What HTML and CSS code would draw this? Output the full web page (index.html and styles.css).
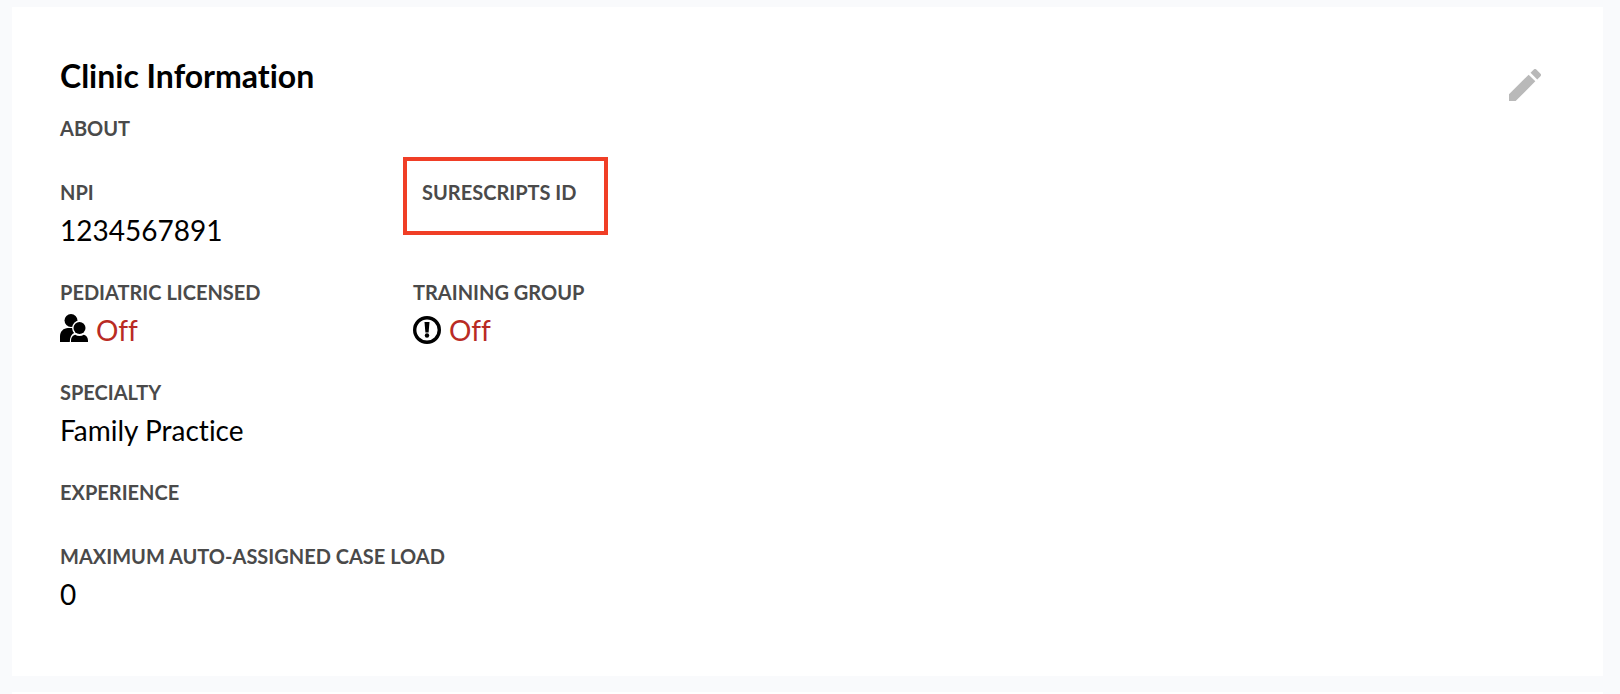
FILE: index.html
```html
<!DOCTYPE html>
<html lang="en">
<head>
    <meta charset="UTF-8">
    <meta name="viewport" content="width=device-width, initial-scale=1.0">
    <title>Clinic Information</title>
    <link rel="stylesheet" href="styles.css">
</head>
<body>
    <main class="page">
        <section class="card">
            <div class="details">
                <h2 class="card-title">Clinic Information</h2>
                <dl class="fields">
                    <div class="field wide">
                        <dt>About</dt>
                    </div>
                    <div class="field">
                        <dt>NPI</dt>
                        <dd>1234567891</dd>
                    </div>
                    <div class="field highlight">
                        <dt>Surescripts ID</dt>
                    </div>
                    <div class="field">
                        <dt>Pediatric Licensed</dt>
                        <dd class="off">
                            <svg class="icon" viewBox="0 0 28 32" aria-hidden="true">
                                <circle cx="11" cy="6.5" r="6.5"/>
                                <path d="M0 28v-5.5C0 17.500 3.500 14 8 14h4.500a8 8 0 0 0 2 4.700C11.500 20 9.800 23 9.800 28z"/>
                                <circle cx="19.500" cy="14" r="7.400" fill="#fff"/>
                                <circle cx="19.500" cy="14" r="6"/>
                                <path d="M11 28v-1.500c0-3 1.600-5 4.200-5.700 2.600 1.600 6 1.600 8.600 0 2.600.7 4.200 2.700 4.200 5.700V28z"/>
                            </svg>
                            Off
                        </dd>
                    </div>
                    <div class="field">
                        <dt>Training Group</dt>
                        <dd class="off">
                            <svg class="icon" viewBox="0 0 28 32" aria-hidden="true">
                                <circle cx="14" cy="16" r="12.300" fill="none" stroke="#000" stroke-width="3.400"/>
                                <path d="M11.500 8h5l-.9 10.500h-3.200z"/>
                                <circle cx="14" cy="21.500" r="2.200"/>
                            </svg>
                            Off
                        </dd>
                    </div>
                    <div class="field wide">
                        <dt>Specialty</dt>
                        <dd>Family Practice</dd>
                    </div>
                    <div class="field wide">
                        <dt>Experience</dt>
                    </div>
                    <div class="field wide">
                        <dt>Maximum Auto-Assigned Case Load</dt>
                        <dd>0</dd>
                    </div>
                </dl>
            </div>
            <button type="button" class="edit-button" aria-label="Edit clinic information">
                <svg viewBox="3 3 18 18" aria-hidden="true">
                    <path d="M3 17.250V21h3.750L17.810 9.940l-3.750-3.750L3 17.250zM20.710 7.040a1 1 0 0 0 0-1.410l-2.340-2.340a1 1 0 0 0-1.410 0l-1.830 1.830 3.750 3.750 1.830-1.830z"/>
                </svg>
            </button>
        </section>
        <section class="card next-card"></section>
    </main>
</body>
</html>
```

FILE: styles.css
```css
*,
*::before {
    box-sizing: border-box;
}
body {
    margin: 0;
    background-color: #f9fafc;
    color: #000;
    font-family: Lato, "Liberation Sans", sans-serif;
    font-variant-ligatures: none;
}
.page {
    display: flex;
    flex-direction: column;
    gap: 16px;
    padding: 7px 17px 0 12px;
}
.card {
    display: flex;
    justify-content: space-between;
    align-items: flex-start;
    padding: 48px 48px 64px;
    background-color: #fff;
}
.next-card {
    padding: 0;
    min-height: 3px;
}
.details {
    flex: 1;
}
.card-title {
    margin: 0 0 12px;
    font-size: 32px;
    line-height: 41px;
    font-weight: bold;
}
.fields {
    display: grid;
    grid-template-columns: 353px 353px;
    row-gap: 24px;
    margin: 0;
}
.wide {
    grid-column: 1 / -1;
}
dt {
    color: #4a4a4a;
    font-size: 20px;
    line-height: 40px;
    font-weight: bold;
    text-transform: uppercase;
}
dd {
    margin: 0;
    font-size: 28px;
    line-height: 36px;
}
.off {
    display: flex;
    align-items: center;
    gap: 8px;
    color: #b92b24;
}
.icon {
    width: 28px;
    height: 32px;
    fill: #000;
}
.highlight {
    position: relative;
    justify-self: start;
    padding: 0 20px 0 9px;
}
/* red frame around the field */
.highlight::before {
    content: "";
    position: absolute;
    top: -15px;
    right: -11px;
    left: -10px;
    height: 78px;
    border: 4px solid #f03e26;
}
.edit-button {
    padding: 14px;
    border: none;
    background: none;
    cursor: pointer;
}
.edit-button svg {
    display: block;
    width: 32px;
    height: 32px;
    fill: #b9b9b9;
}
```
